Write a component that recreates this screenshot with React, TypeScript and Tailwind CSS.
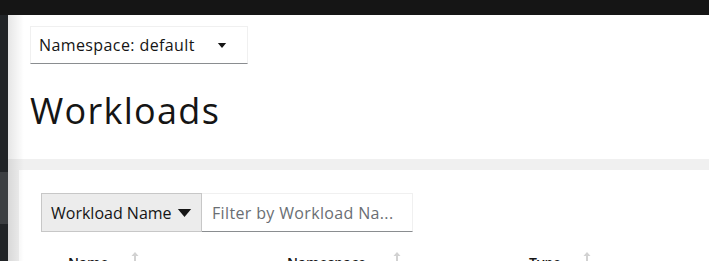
const Caret = ({ className }: { className?: string }) => (
  <svg viewBox="0 0 10 6" className={className} fill="currentColor"><path d="M0 0h10L5 6z" /></svg>
);

const SortIcon = () => (
  <svg viewBox="0 0 8 16" className="h-[16px] w-[8px] text-[#d2d2d2]" fill="currentColor">
    <path d="M4 0l3.5 4H5v12H3V4H0.5z" />
  </svg>
);

export default function App() {
  return (
    <div className="flex h-[261px] w-[709px] flex-col overflow-hidden bg-white font-['Open_Sans',sans-serif] text-[#151515]">
      <div className="h-[15px] shrink-0 bg-[#151515]" />
      <div className="flex flex-1">
        {/* sidebar */}
        <div className="flex w-[8px] shrink-0 flex-col bg-[#212427]">
          <div className="h-[157px]" />
          <div className="h-[52px] bg-[#3c3f42]" />
        </div>

        <main className="relative flex flex-1 flex-col">
          <div className="pointer-events-none absolute inset-y-0 left-0 w-[16px] bg-gradient-to-r from-black/10 to-transparent" />

          <section className="h-[144px] pl-[22px] pt-[11px]">
            <button className="flex h-[38px] w-[218px] items-center justify-between border border-[#f0f0f0] border-b-[#8a8d90] pl-[8px] pr-[20px] text-[16px]">
              <span className="tracking-[0.4px]">Namespace: default</span>
              <Caret className="h-[5px] w-[10px]" />
            </button>
            <h1 className="mt-[25px] text-[36px] leading-[44px] tracking-[1.3px]">Workloads</h1>
          </section>

          <div className="flex flex-1 bg-[#f0f0f0] pl-[11px] pt-[11px]">
            <div className="flex-1 bg-white pl-[22px] pt-[23px]">
              <div className="flex h-[39px]">
                <button className="flex w-[161px] items-center justify-between border border-[#c7c7c7] bg-[#ececec] pl-[9px] pr-[9px] text-[16px]">
                  <span>Workload Name</span>
                  <Caret className="h-[8px] w-[15px]" />
                </button>
                <div className="flex w-[211px] items-center border border-l-0 border-[#f0f0f0] border-b-[#8a8d90] pl-[10px] text-[16px] tracking-[0.35px] text-[#6a6e73]">
                  Filter by Workload Na...
                </div>
              </div>

              <div className="mt-[20px] flex text-[14px] font-semibold">
                <div className="flex w-[219px] gap-[22px] pl-[27px]">
                  <span>Name</span>
                  <SortIcon />
                </div>
                <div className="flex w-[242px] gap-[27px] pl-[27px]">
                  <span>Namespace</span>
                  <SortIcon />
                </div>
                <div className="flex gap-[22px] pl-[27px]">
                  <span>Type</span>
                  <SortIcon />
                </div>
              </div>
            </div>
          </div>
        </main>
      </div>
    </div>
  );
}
